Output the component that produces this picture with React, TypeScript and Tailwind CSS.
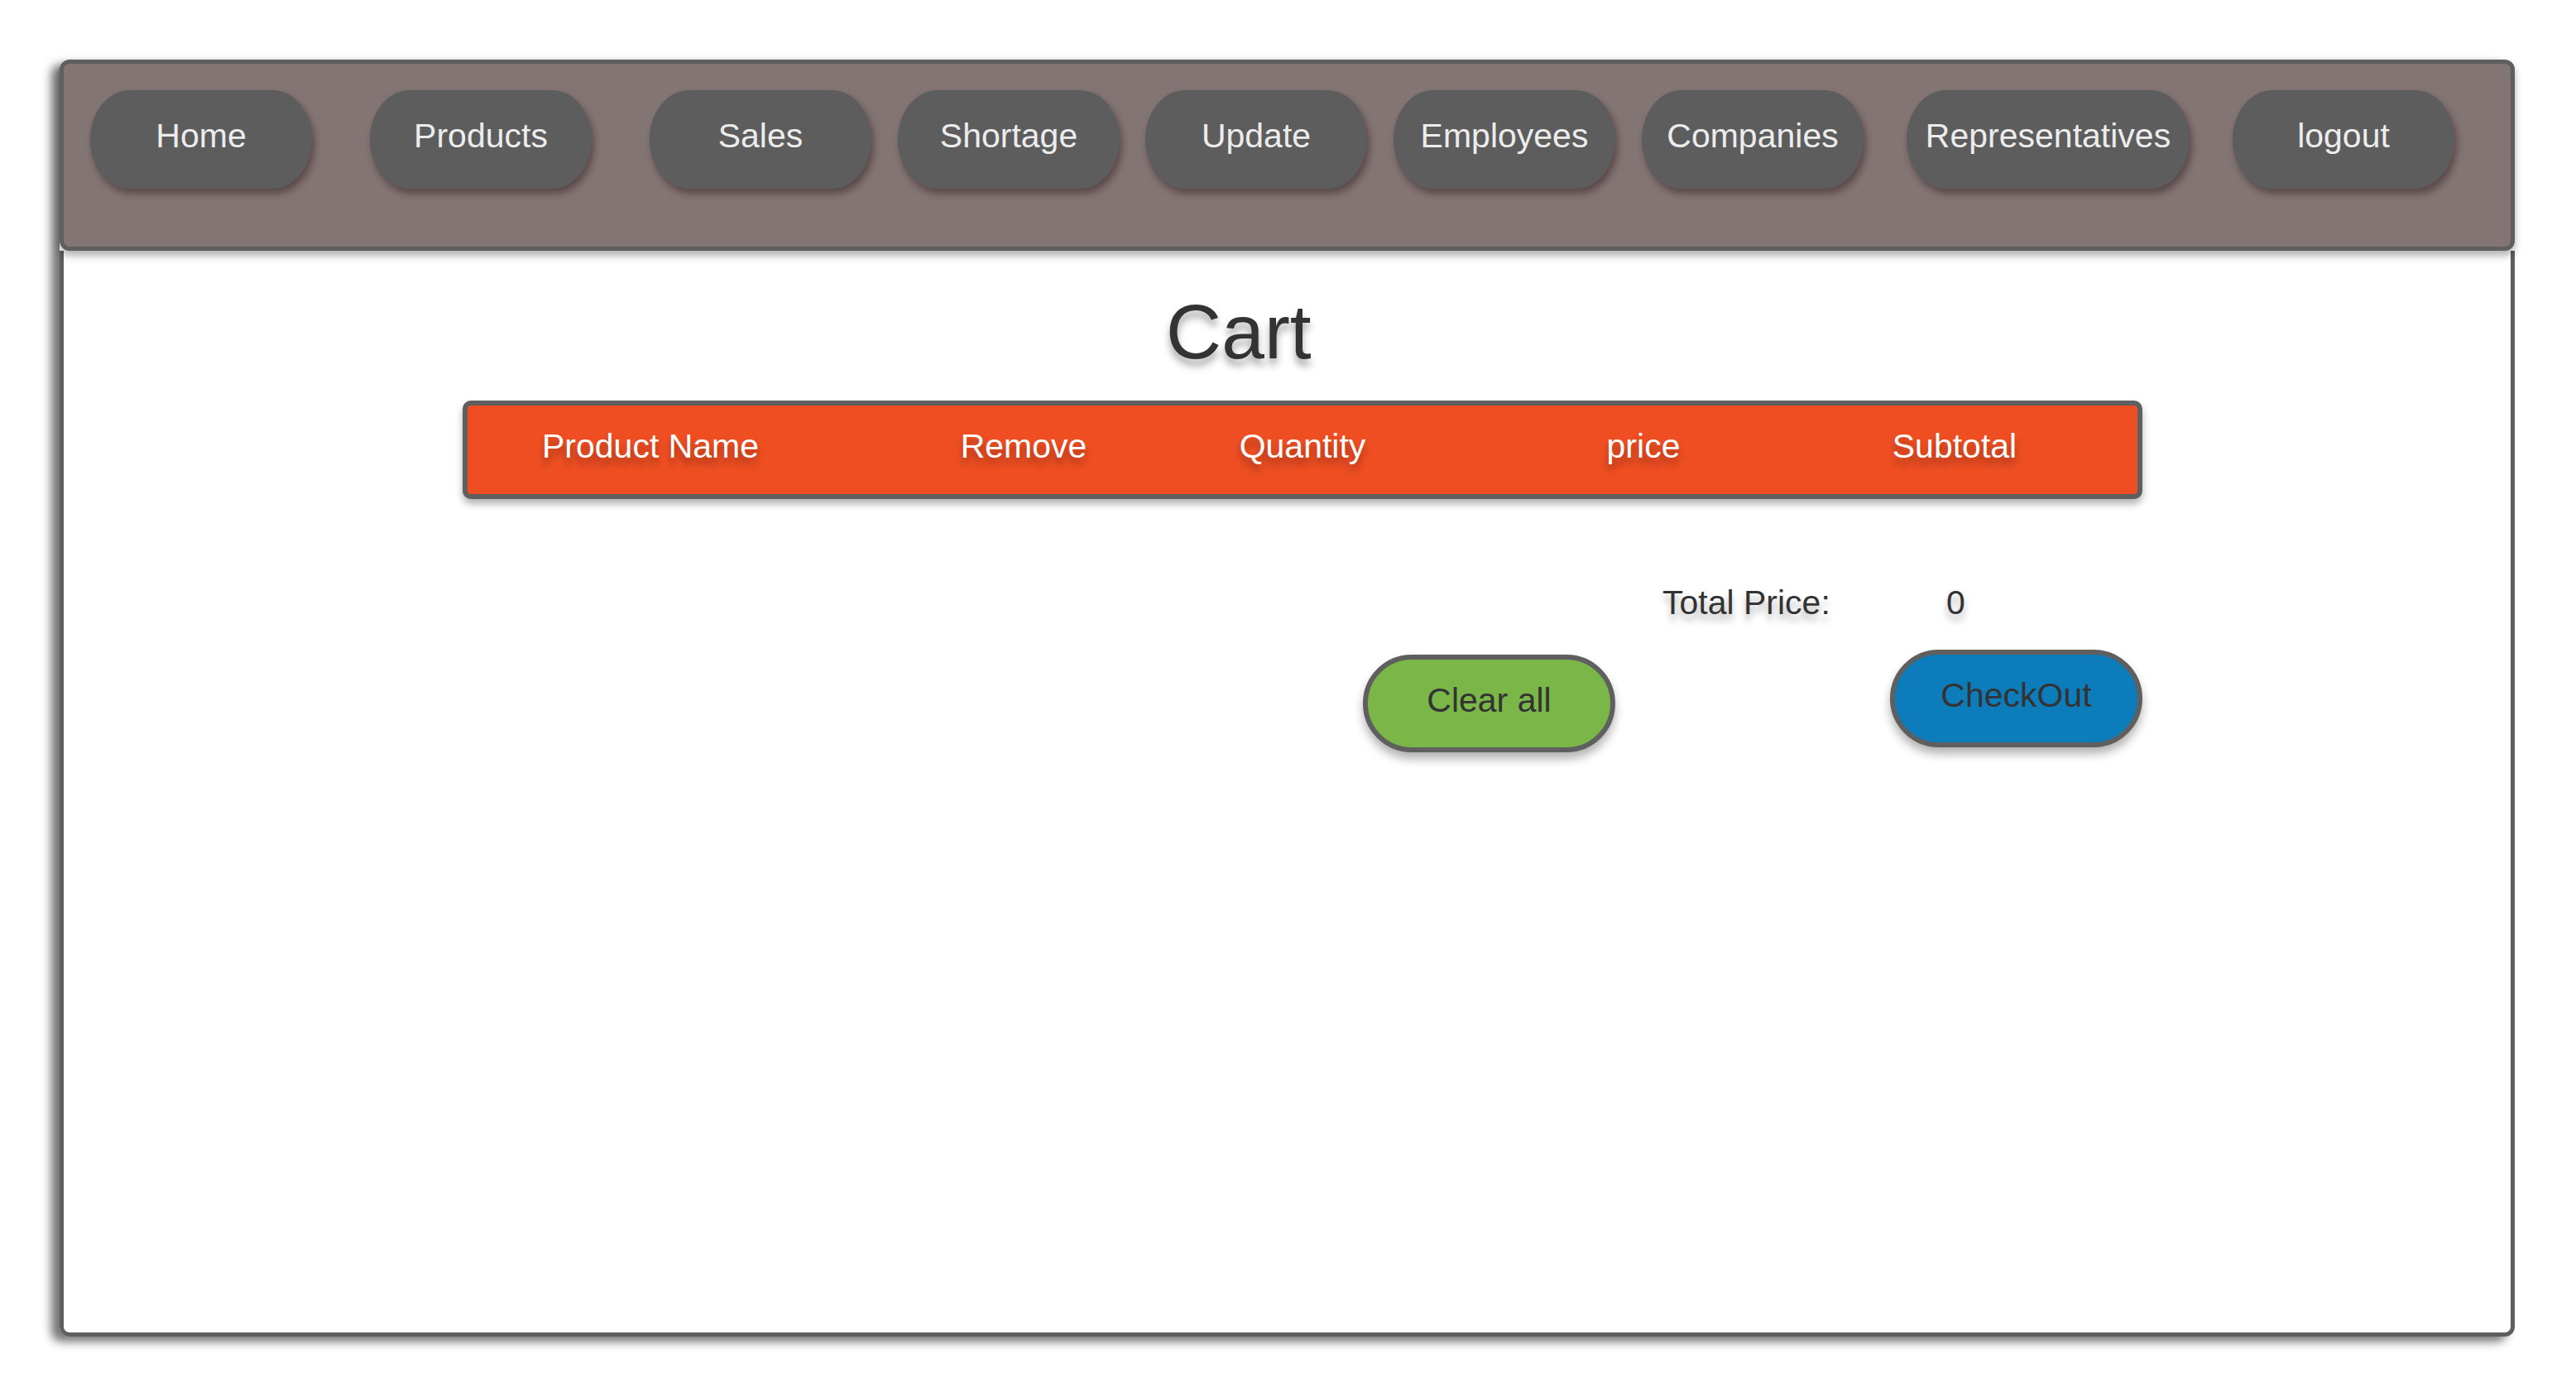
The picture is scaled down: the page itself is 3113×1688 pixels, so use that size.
import React from "react";

const navItems: { label: string; cls: string }[] = [
  { label: "Home", cls: "w-[268px]" },
  { label: "Products", cls: "w-[268px] ml-[70px]" },
  { label: "Sales", cls: "w-[268px] ml-[70px]" },
  { label: "Shortage", cls: "w-[268px] ml-[32px]" },
  { label: "Update", cls: "w-[268px] ml-[31px]" },
  { label: "Employees", cls: "w-[268px] ml-[32px]" },
  { label: "Companies", cls: "w-[268px] ml-[32px]" },
  { label: "Representatives", cls: "w-[342px] ml-[52px]" },
  { label: "logout", cls: "w-[268px] ml-[52px]" },
];

const headers: { label: string; cls: string }[] = [
  { label: "Product Name", cls: "ml-[71px]" },
  { label: "Remove", cls: "ml-[151px]" },
  { label: "Quantity", cls: "ml-[37px]" },
  { label: "price", cls: "ml-[112px]" },
  { label: "Subtotal", cls: "ml-[76px]" },
];

export default function App() {
  return (
    <div
      className="w-[3113px] h-[1688px] bg-white pt-[72px] pl-[72px]"
      style={{ fontFamily: "'Liberation Sans', Arial, sans-serif" }}
    >
      <div className="w-[2967px] h-[1543px] flex flex-col rounded-[12px] shadow-[-10px_6px_12px_rgba(0,0,0,0.55)]">
        {/* Navbar */}
        <div className="relative z-10 h-[231px] shrink-0 border-[5px] border-[#5f5f5f] rounded-[12px] bg-[#837574] flex items-start pt-[32px] pl-[32px] shadow-[0_6px_10px_rgba(0,0,0,0.3)]">
          {navItems.map((n) => (
            <div
              key={n.label}
              className={`${n.cls} h-[119px] shrink-0 rounded-[48px/60px] bg-[#5d5d5d] flex items-center justify-center pb-[8px] text-[41px] leading-none text-[#ececec] shadow-[3px_6px_8px_rgba(40,20,20,0.45)]`}
            >
              {n.label}
            </div>
          ))}
        </div>

        {/* Body */}
        <div className="flex-1 bg-white border-x-[5px] border-b-[5px] border-[#5f5f5f] rounded-b-[12px] flex flex-col items-start">
          <div className="mt-[52px] ml-[1332px] text-[93px] leading-none text-[#333333] [text-shadow:0_8px_10px_rgba(0,0,0,0.35)]">
            Cart
          </div>

          <div className="mt-[36px] ml-[482px] w-[2030px] h-[119px] border-[6px] border-[#5f5f5f] rounded-[10px] bg-[#ee4e22] flex items-center pb-[8px] shadow-[0_6px_10px_rgba(0,0,0,0.3)]">
            {headers.map((h) => (
              <div
                key={h.label}
                className={`${h.cls} w-[300px] shrink-0 text-center text-[41px] leading-none text-white [text-shadow:0_8px_8px_rgba(0,0,0,0.3)]`}
              >
                {h.label}
              </div>
            ))}
          </div>

          <div className="mt-[105px] ml-[1932px] flex text-[41px] leading-none text-[#333333] [text-shadow:0_8px_8px_rgba(0,0,0,0.3)]">
            <span className="w-[343px]">Total Price:</span>
            <span>0</span>
          </div>

          <div className="mt-[36px] flex items-start">
            <div className="mt-[6px] ml-[1570px] w-[305px] h-[118px] rounded-full border-[6px] border-[#5f5f5f] bg-[#7ab648] flex items-center justify-center pb-[8px] text-[41px] leading-none text-[#333333] shadow-[0_8px_12px_rgba(0,0,0,0.3)]">
              Clear all
            </div>
            <div className="ml-[332px] w-[305px] h-[118px] rounded-full border-[6px] border-[#5f5f5f] bg-[#0c7cba] flex items-center justify-center pb-[8px] text-[41px] leading-none text-[#333333] shadow-[0_8px_12px_rgba(0,0,0,0.3)]">
              CheckOut
            </div>
          </div>
        </div>
      </div>
    </div>
  );
}
